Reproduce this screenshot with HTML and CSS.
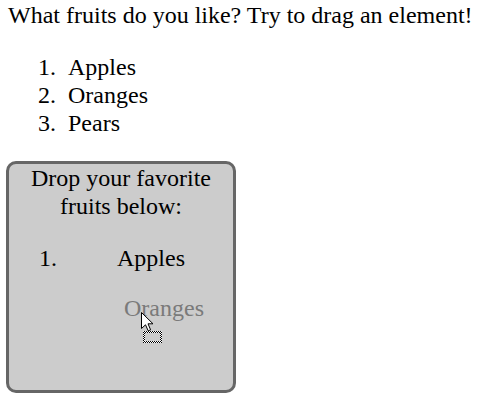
FILE: index.html
```html
<!DOCTYPE html>
<html>
<head>
<meta charset="utf-8">
<title>Fruits</title>
<link rel="stylesheet" href="styles.css">
</head>
<body>
<p class="question">What fruits do you like? Try to drag an element!</p>
<ol class="fruits">
  <li>Apples</li>
  <li>Oranges</li>
  <li>Pears</li>
</ol>
<div class="dropzone">
  <p class="drop-title">Drop your favorite fruits below:</p>
  <ol class="dropped">
    <li>Apples</li>
  </ol>
  <span class="drag-ghost">Oranges</span>
  <svg class="cursor" width="24" height="34" viewBox="0 0 24 34">
    <defs>
      <pattern id="checker" width="2" height="2" patternUnits="userSpaceOnUse">
        <rect width="2" height="2" fill="#fff"/>
        <rect width="1" height="1" fill="#000"/>
        <rect x="1" y="1" width="1" height="1" fill="#000"/>
      </pattern>
    </defs>
    <rect x="3" y="20" width="17" height="10" fill="none" stroke="url(#checker)" stroke-width="2"/>
    <path d="M0.5 0.5 L0.5 16.5 L4.5 12.8 L7.2 18.8 L9.6 17.8 L7 11.8 L12 11.8 Z" fill="#fff" stroke="#000" stroke-width="1" stroke-linejoin="miter"/>
  </svg>
</div>
</body>
</html>
```

FILE: styles.css
```css
html, body {
  margin: 0;
  padding: 0;
  background: #fff;
}

body {
  padding: 1px 0 0 6px;
  font-family: "Liberation Serif", "Times New Roman", serif;
  font-size: 24px;
  line-height: 28px;
  color: #000;
}

.question {
  margin: 0 0 0 2px;
}

.fruits {
  margin: 24px 0;
  padding-left: 62px;
}

.fruits li::marker,
.dropped li::marker {
  content: counter(list-item) ".\00a0\00a0";
}

.dropzone {
  position: relative;
  box-sizing: border-box;
  width: 230px;
  height: 232px;
  background: #cccccc;
  border: 3px solid #666666;
  border-radius: 10px;
  text-align: center;
}

.drop-title {
  margin: 0;
}

.dropped {
  margin: 24px 0;
  padding-left: 60px;
}

.drag-ghost {
  position: absolute;
  left: 115px;
  top: 130px;
  color: #7a7a7a;
}

.cursor {
  position: absolute;
  left: 132px;
  top: 148px;
}
```
